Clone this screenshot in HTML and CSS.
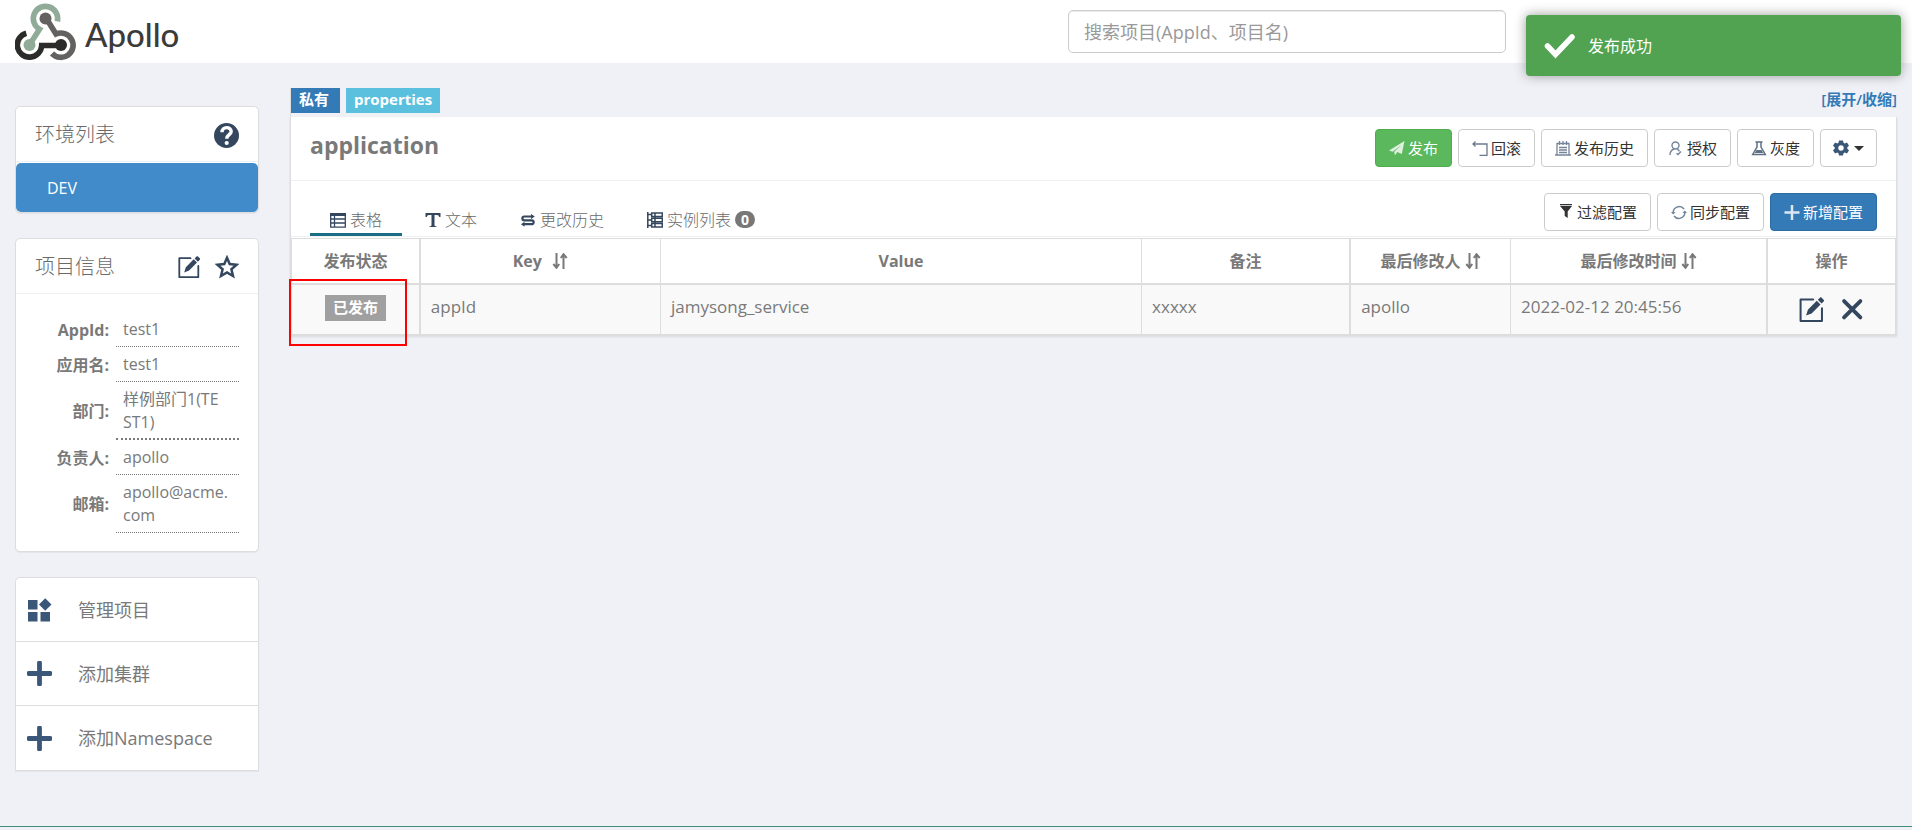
FILE: index.html
```html
<!DOCTYPE html>
<html lang="zh-CN">
<head>
<meta charset="utf-8">
<title>Apollo</title>
<link rel="stylesheet" href="styles.css">
</head>
<body>
<svg class="sprite" aria-hidden="true">
  <symbol id="i-edit" viewBox="0 0 24 24"><path d="M13.5 3.2H2.3v19h19V10.8" fill="none" stroke="currentColor" stroke-width="1.8" stroke-linejoin="round" stroke-linecap="round"/><path d="M7.2 17.4l1.6-5.2 7.9-7.9 3.3 3.3-7.9 7.9zM17.6 3.4l1.9-1.9c.5-.5 1-.5 1.5 0l1.8 1.8c.5.5.5 1 0 1.5l-1.9 1.9z" fill="currentColor"/></symbol>
  <symbol id="i-plus" viewBox="0 0 24 24"><path d="M12 1.8v20.4M1.8 12h20.4" stroke="currentColor" stroke-width="4.6" stroke-linecap="round"/></symbol>
  <symbol id="i-sort" viewBox="0 0 16 16"><path d="M4.5 0v14M11.5 16V2M1.3 11l3.2 3.8L7.200 11M8.800 5l2.700-3.800L14.700 5" fill="none" stroke="currentColor" stroke-width="2"/></symbol>
</svg>

<header class="topbar">
  <a class="brand" href="#" aria-label="Apollo">
    <svg class="brand-mark" viewBox="0 0 62 62" aria-hidden="true">
      <g fill="none" stroke-width="5.600">
        <path d="M42.400 20.300A12.200 12.200 0 1 0 24.500 28.200L15 43" stroke="#91ab99"/>
        <path d="M31 17L41 33A12.200 12.200 0 1 1 37 52.500" stroke="#636260"/>
        <path d="M11.300 32.200A12.200 12.200 0 1 0 26.700 44.500H46" stroke="#2b2b2a"/>
      </g>
      <circle cx="14.500" cy="44" r="6" fill="#91ab99"/>
      <circle cx="30.500" cy="17.500" r="6" fill="#636260"/>
      <circle cx="46" cy="44" r="6" fill="#2b2b2a"/>
    </svg>
    <span class="brand-name">Apollo</span>
  </a>
  <input class="search" type="text" aria-label="搜索项目" placeholder="搜索项目(AppId、项目名)">
</header>

<div class="toast" role="status">
  <svg viewBox="0 0 32 26" aria-hidden="true"><path d="M3.500 13l8 8.500L28 4" fill="none" stroke="#fff" stroke-width="5.500" stroke-linecap="round"/></svg>
  <span>发布成功</span>
</div>

<div class="layout">
  <aside class="sidebar">
    <section class="panel">
      <header class="panel-head"><h2>环境列表</h2>
        <svg class="ico25" viewBox="0 0 25 25" aria-label="帮助"><circle cx="12.500" cy="12.500" r="12.500" fill="#34475f"/><path d="M8 9.200c0-6 9.200-6 9.200-.7 0 3.200-4.500 3.200-4.500 7.300" fill="none" stroke="#fff" stroke-width="3.400"/><circle cx="12.700" cy="20" r="2.100" fill="#fff"/></svg>
      </header>
      <button class="env" type="button">DEV</button>
    </section>

    <section class="panel info">
      <header class="panel-head"><h2>项目信息</h2>
        <span class="head-icons">
          <svg class="ico24" aria-label="编辑"><use href="#i-edit"/></svg>
          <svg class="ico24" viewBox="0 0 24 24" aria-label="收藏"><path d="M12 2.800l2.700 6.300 6.900.6-5.200 4.500 1.600 6.800-6-3.600-6 3.600 1.600-6.800-5.200-4.500 6.900-.6z" fill="none" stroke="currentColor" stroke-width="2.500"/></svg>
        </span>
      </header>
      <table class="facts">
        <tr><th scope="row">AppId:</th><td>test1</td></tr>
        <tr><th scope="row">应用名:</th><td>test1</td></tr>
        <tr><th scope="row">部门:</th><td class="strong-rule">样例部门1(TE<br>ST1)</td></tr>
        <tr><th scope="row">负责人:</th><td>apollo</td></tr>
        <tr><th scope="row">邮箱:</th><td>apollo@acme.<wbr>com</td></tr>
      </table>
    </section>

    <nav class="panel actions">
      <a href="#"><svg viewBox="0 0 25 25" aria-hidden="true"><path d="M1 3h9.500v9.500H1zM1 15h9.500v9.500H1zM13.500 15H23v9.500h-9.500zM18.200 1.300l6.300 6.200-6.300 6.300L12 7.500z" fill="currentColor"/></svg>管理项目</a>
      <a href="#"><svg aria-hidden="true"><use href="#i-plus"/></svg>添加集群</a>
      <a href="#"><svg aria-hidden="true"><use href="#i-plus"/></svg>添加Namespace</a>
    </nav>
  </aside>

  <main class="content">
    <div class="tagline">
      <span class="tag tag-private">私有</span>
      <span class="tag tag-format">properties</span>
      <a class="toggle" href="#">[展开/收缩]</a>
    </div>

    <section class="namespace">
      <header class="ns-head">
        <h1>application</h1>
        <div class="buttons">
          <button class="btn btn-green" type="button"><svg viewBox="0 0 16 16" aria-hidden="true"><path d="M0 10.500L15.500 1l-2.700 13-4.600-2L6 15.500l-.8-3.700L12.500 5 3.600 11.800z" fill="#dff0df"/></svg>发布</button>
          <button class="btn" type="button"><svg viewBox="0 0 16 16" aria-hidden="true"><path d="M3.500 1.500L1 4l2.500 2.500M1 4h14v11.300H7.500" fill="none" stroke="#6b7b8f" stroke-width="1.300"/></svg>回滚</button>
          <button class="btn" type="button"><svg viewBox="0 0 16 16" aria-hidden="true"><path d="M2 3.500h12v11.500H2zM0 15h16M4.500 1v4M8 1v4M11.500 1v4M4 7.500h8M4 10h8M4 12.500h8" fill="none" stroke="#74859a" stroke-width="1.300"/></svg>发布历史</button>
          <button class="btn" type="button"><svg viewBox="0 0 16 16" aria-hidden="true"><circle cx="7.500" cy="5.500" r="3.500" fill="none" stroke="#74859a" stroke-width="1.400"/><path d="M2 15c0-3.500 1.500-5 4-6M9.500 9l2 2.200M8.500 13.200l1.500 1.400 3-3" fill="none" stroke="#74859a" stroke-width="1.400"/></svg>授权</button>
          <button class="btn" type="button"><svg viewBox="0 0 16 16" aria-hidden="true"><path d="M4.500 2h7M6 2v5l-4.300 7.500h12.600L10 7V2" fill="none" stroke="#5f7085" stroke-width="1.500"/><path d="M5.500 10h5l1.800 3H3.700z" fill="#5f7085"/></svg>灰度</button>
          <button class="btn btn-gear" type="button" aria-label="设置"><svg viewBox="0 0 16 16" aria-hidden="true"><path fill-rule="evenodd" d="M6 .5h4l.5 2.200 1.300.7 2.200-.9 2 3.200-1.700 1.500v1.600L16 10.300l-2 3.200-2.200-.9-1.300.7-.5 2.200H6l-.5-2.200-1.300-.7-2.200.9-2-3.200 1.700-1.500V7.200L0 5.700l2-3.200 2.200.9 1.300-.7zM8 5.300a2.700 2.700 0 1 0 0 5.400 2.700 2.700 0 0 0 0-5.400z" fill="#3a5678"/></svg><i class="caret"></i></button>
        </div>
      </header>

      <div class="ns-bar">
        <nav class="tabs">
          <a class="tab active" href="#"><svg viewBox="0 0 16 16" aria-hidden="true"><path d="M0 1h16v3H0z" fill="#34475f"/><path d="M.7 2h14.600v13.200H.7zM4.500 3v12M.7 7h14.600M.7 11h14.600" fill="none" stroke="#34475f" stroke-width="1.300"/></svg>表格</a>
          <a class="tab" href="#"><svg viewBox="0 0 16 16" aria-hidden="true"><path d="M.5 1h15v4h-1.300c-.3-1.300-.9-2-2-2H9.500v10c0 .8.500 1.200 2 1.300V15h-7v-.7c1.500-.1 2-.5 2-1.300V3H3.800c-1.100 0-1.700.7-2 2H.5z" fill="#34475f"/></svg>文本</a>
          <a class="tab" href="#"><svg viewBox="0 0 16 16" aria-hidden="true"><path d="M12 4.500H4.300a1.900 1.900 0 0 0 0 3.800h7.400a1.900 1.900 0 0 1 0 3.900H3" fill="none" stroke="#34475f" stroke-width="2.200"/><path d="M11 2l3.800 2.500L11 7zM4.500 9.700L1 12.200l3.500 2.500z" fill="#34475f"/></svg>更改历史</a>
          <a class="tab" href="#"><svg viewBox="0 0 16 16" aria-hidden="true"><path d="M.8 0v16M0 2.500h5M0 8h5M0 13.500h5" stroke="#34475f" stroke-width="1.500"/><path d="M4.700 1h10.600v3.500H4.700zM4.700 6.300h10.600v3.500H4.700zM4.700 11.600h10.600v3.500H4.700zM8 1v14" fill="none" stroke="#34475f" stroke-width="1.500"/></svg>实例列表<span class="count">0</span></a>
        </nav>
        <div class="buttons">
          <button class="btn" type="button"><svg viewBox="0 0 16 16" aria-hidden="true"><path d="M2 0h12v1.200H2zM2 2h12L9.700 7.500V14l-3-2V7.500z" fill="#333"/></svg>过滤配置</button>
          <button class="btn" type="button"><svg viewBox="0 0 16 16" aria-hidden="true"><path d="M2.300 9.500A6 6 0 0 1 13 5M13.700 7.500A6 6 0 0 1 3 12" fill="none" stroke="#74859a" stroke-width="1.500"/><path d="M0 8h4.500L2.200 10.500zM11.500 9H16l-2.300-2.500z" fill="#74859a"/></svg>同步配置</button>
          <button class="btn btn-blue" type="button"><svg viewBox="0 0 16 16" aria-hidden="true"><path d="M8 1v15M0.500 8.500h15" stroke="#dbe7f2" stroke-width="2.500"/></svg>新增配置</button>
        </div>
      </div>

      <table class="items">
        <colgroup><col class="c-state"><col class="c-key"><col class="c-value"><col class="c-note"><col class="c-user"><col class="c-time"><col class="c-ops"></colgroup>
        <thead>
          <tr><th>发布状态</th><th>Key <svg class="sort wide" aria-hidden="true"><use href="#i-sort"/></svg></th><th>Value</th><th>备注</th><th>最后修改人 <svg class="sort" aria-hidden="true"><use href="#i-sort"/></svg></th><th>最后修改时间 <svg class="sort" aria-hidden="true"><use href="#i-sort"/></svg></th><th>操作</th></tr>
        </thead>
        <tbody>
          <tr><td class="state"><span class="published">已发布</span><span class="marker"></span></td><td>appId</td><td>jamysong_service</td><td>xxxxx</td><td>apollo</td><td>2022-02-12 20:45:56</td>
          <td class="ops"><button type="button" aria-label="编辑"><svg aria-hidden="true"><use href="#i-edit"/></svg></button><button type="button" aria-label="删除"><svg viewBox="0 0 24 24" aria-hidden="true"><path d="M4.500 4.500l14.500 14.500M19 4.500L4.500 19" stroke="currentColor" stroke-width="3.400" stroke-linecap="round"/></svg></button></td></tr>
        </tbody>
      </table>
    </section>
  </main>
</div>
<footer class="foot"></footer>
</body>
</html>
```
FILE: styles.css
```css
* { box-sizing: border-box; }

body {
  margin: 0;
  min-height: 100vh;
  display: flex;
  flex-direction: column;
  background: #f0f1f7;
  color: #797979;
  font: 16px/22px "Open Sans", "Noto Sans CJK SC", sans-serif;
}

h1, h2 { margin: 0; }
a { color: inherit; text-decoration: none; }
button { font: inherit; cursor: pointer; }
.sprite { position: absolute; width: 0; height: 0; }

/* top bar */
.topbar {
  height: 63px;
  padding: 0 406px 0 15px;
  display: flex;
  align-items: center;
  justify-content: space-between;
  background: #fff;
}
.brand { display: flex; align-items: center; gap: 8px; }
.brand-mark { width: 62px; height: 62px; }
.brand-name { padding-top: 4px; color: #3b3b3a; font: 500 33px/40px Lato, sans-serif; }
.search {
  width: 438px;
  height: 43px;
  padding: 0 15px;
  border: 1px solid #ccc;
  border-radius: 5px;
  box-shadow: inset 0 1px 1px rgba(0, 0, 0, .08);
  font: 18px "Open Sans", "Noto Sans CJK SC", sans-serif;
}
.search::placeholder { color: #999; }

.toast {
  position: absolute;
  top: 15px;
  right: 11px;
  width: 375px;
  height: 61px;
  padding: 0 18px;
  display: flex;
  align-items: center;
  gap: 12px;
  border-radius: 4px;
  background: #51a351;
  box-shadow: 0 0 12px #999;
  color: #fff;
}
.toast svg { width: 32px; height: 26px; }

/* page columns */
.layout {
  flex: 1;
  display: grid;
  grid-template-columns: 244px minmax(0, 1fr);
  gap: 31px;
  padding: 25px 15px 0;
}

/* sidebar */
.sidebar { padding-top: 18px; display: flex; flex-direction: column; gap: 25px; }
.panel {
  border: 1px solid #ddd;
  border-radius: 5px;
  background: #fff;
  box-shadow: 0 1px 1px rgba(0, 0, 0, .05);
}
.panel-head {
  height: 55px;
  padding: 2px 19px 0;
  display: flex;
  align-items: center;
  justify-content: space-between;
  border-bottom: 1px solid #eff0f4;
  color: #34475f;
}
.panel-head h2 { color: #6a6a6a; font-size: 20px; font-weight: 300; }
.ico25 { width: 25px; height: 25px; }
.ico24 { width: 24px; height: 24px; }
.head-icons { display: flex; gap: 14px; }
.env {
  width: 100%;
  height: 49px;
  margin-top: 1px;
  padding: 0 31px;
  display: block;
  border: 0;
  border-radius: 5px;
  background: #428bca;
  color: #fff;
  text-align: left;
}

.facts { width: 100%; padding: 18px 19px 18px 16px; border-collapse: separate; border-spacing: 0; table-layout: fixed; }
.facts th { padding: 0 7px 0 0; text-align: right; }
.facts td {
  width: 123px;
  padding: 6px 7px 5px;
  border-bottom: 1px dotted #797979;
  line-height: 23px;
  word-break: break-all;
}
.facts td.strong-rule { padding-bottom: 4px; border-bottom-width: 2px; }

.actions { border-bottom-left-radius: 0; border-bottom-right-radius: 0; }
.actions a {
  height: 64px;
  padding: 0 11px;
  display: flex;
  align-items: center;
  gap: 26px;
  border-bottom: 1px solid #ddd;
  font-size: 18px;
}
.actions a:last-child { border-bottom: 0; }
.actions svg { width: 25px; height: 25px; color: #3a5678; }

/* namespace */
.tagline { display: flex; align-items: flex-start; gap: 6px; height: 29px; border-left: 1px solid #ddd; }
.tag { height: 25px; padding: 0 8px; color: #fff; font-size: 15px; font-weight: 700; line-height: 23px; }
.tag-private { background: #337ab7; padding-right: 11px; }
.tag-format { background: #5bc0de; }
.toggle { margin-left: auto; color: #337ab7; font-size: 15px; font-weight: 600; line-height: 23px; }

.namespace { border: 1px solid #ddd; border-top: 0; background: #fff; box-shadow: 0 1px 2px rgba(0, 0, 0, .1); }
.ns-head, .ns-bar {
  padding: 12px 19px 0;
  display: flex;
  justify-content: space-between;
  border-bottom: 1px solid #eff0f4;
}
.ns-head { height: 64px; }
.ns-head h1 { font-size: 23px; line-height: 32px; }
.ns-bar { height: 56px; }
.buttons { display: flex; gap: 6px; }
.btn {
  height: 38px;
  padding: 0 13px;
  display: flex;
  align-items: center;
  gap: 3px;
  border: 1px solid #ccc;
  border-radius: 4px;
  background: #fff;
  color: #333;
  font-size: 15px;
}
.btn svg { width: 16px; height: 16px; }
.btn-green { border-color: #4cae4c; background: #5cb85c; color: #fff; }
.btn-blue { border-color: #2e6da4; background: #337ab7; color: #fff; }
.btn-gear { padding: 0 12px; gap: 5px; }
.caret { border: 5px solid transparent; border-top-color: #333; border-bottom: 0; }

.tabs { display: flex; gap: 3px; align-items: flex-end; }
.tab { height: 34px; padding: 4px 20px 0; display: flex; align-items: center; gap: 4px; color: #6a6a6a; font-weight: 300; border-bottom: 3px solid transparent; }
.tab.active { border-color: #1b6d85; }
.tab svg { width: 16px; height: 16px; }
.count { min-width: 20px; height: 17px; border-radius: 9px; background: #777; color: #fff; font-size: 14px; font-weight: 700; line-height: 17px; text-align: center; }

.items { width: 100%; margin-top: 1px; border-collapse: collapse; table-layout: fixed; }
.c-state { width: 8%; }
.c-key { width: 15%; }
.c-value { width: 30%; }
.c-note { width: 13%; }
.c-user { width: 10%; }
.c-time { width: 16%; }
.c-ops { width: 8%; }
.items th, .items td { border: 1px solid #ddd; }
.items th { height: 45px; padding: 0 8px; border-bottom-width: 2px; text-align: center; }
.items td { height: 50px; padding: 10px; background: #f9f9f9; vertical-align: top; font-size: 17px; line-height: 23px; }
.items th:nth-child(1), .items td:nth-child(1),
.items th:nth-child(4), .items td:nth-child(4),
.items th:nth-child(6), .items td:nth-child(6) { border-right-width: 2px; }
.sort { width: 16px; height: 16px; vertical-align: -2px; }
.sort.wide { margin-left: 6px; }
.items .state { position: relative; padding: 10px 0; text-align: center; }
.published { display: inline-block; height: 26px; padding: 0 8px; background: #a0a0a0; color: #fff; font-size: 15px; font-weight: 700; line-height: 25px; }
.marker { position: absolute; top: -6px; left: -3px; width: 118px; height: 67px; border: 2px solid #f00; }
.items .ops { padding: 11px 0; text-align: center; line-height: 0; }
.ops button { display: inline-block; padding: 0; border: 0; background: none; color: #34475f; }
.ops button + button { margin-left: 14px; }
.ops svg { width: 27px; height: 27px; display: block; }

.foot { height: 4px; border-top: 1px solid #3f8f7c; }
```
